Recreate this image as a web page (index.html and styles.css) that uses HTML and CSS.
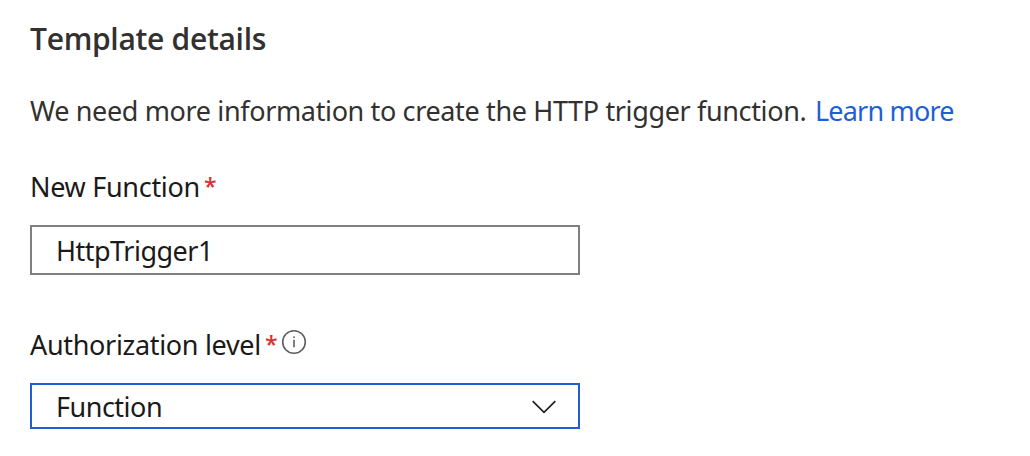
FILE: index.html
```html
<!DOCTYPE html>
<html lang="en">
<head>
<meta charset="utf-8">
<title>Template details</title>
<link rel="stylesheet" href="styles.css">
</head>
<body>
<main class="panel">
  <h1 class="title"><span>Template details</span></h1>
  <p class="intro"><span class="intro-text">We need more information to create the HTTP trigger function.</span><a class="link" href="#">Learn more</a></p>
  <div class="label label-name"><span class="name-text">New Function</span><span class="required">*</span></div>
  <div class="field field-name"><span class="name-value">HttpTrigger1</span></div>
  <div class="label label-auth"><span class="auth-text">Authorization level</span><span class="required">*</span>
    <svg class="info" viewBox="0 0 26 26"><circle cx="13" cy="13" r="11.3"/><path d="M13 10.8v7.4"/><circle class="dot" cx="13" cy="8.2" r="0.9"/></svg>
  </div>
  <div class="field field-auth"><span class="auth-value">Function</span>
    <svg class="chevron" viewBox="0 0 26 16"><path d="M1.7 2.2 13 13.4 24.3 2.2"/></svg>
  </div>
</main>
</body>
</html>
```
FILE: styles.css
```css
* { box-sizing: border-box; }
body { margin: 0; background: #fff; color: #1b1a19; font: 27px/36px "Noto Sans", "Open Sans", sans-serif; }
.panel { width: 1030px; height: 456px; padding: 21px 30px 0; display: flex; flex-direction: column; white-space: nowrap; }
.title { margin: 0; font-family: "Open Sans", sans-serif; font-size: 30px; font-weight: 600; line-height: 36px; letter-spacing: -0.3px; color: #323130; }
.intro { margin: 36px 0 0; display: flex; color: #323130; }
.intro-text { width: 785px; letter-spacing: -0.36px; }
.link { color: #1f5fd6; text-decoration: none; letter-spacing: -0.8px; }
.label { display: flex; height: 36px; }
.label-name { margin-top: 40px; }
.label-auth { margin-top: 52px; }
.name-text { width: 174px; letter-spacing: -0.3px; }
.auth-text { width: 235px; letter-spacing: -0.32px; }
.required { width: 13px; color: #dc3030; font-family: "Open Sans", sans-serif; font-size: 23px; font-weight: 600; line-height: 34px; }
.field { width: 550px; display: flex; align-items: center; justify-content: space-between; padding: 0 21px 0 24px; border: 2px solid #7f7f7f; }
.field-name { height: 50px; margin-top: 20px; padding-top: 2px; }
.field-auth { height: 46px; margin-top: 20px; padding-top: 2px; border-color: #205fd0; }
.name-value { letter-spacing: -0.5px; }
.auth-value { letter-spacing: -0.5px; }
.info { width: 26px; height: 26px; margin: 2px 0 0 3px; fill: none; stroke: #605e5c; stroke-width: 1.6; }
.info .dot { fill: #605e5c; stroke: none; }
.chevron { width: 26px; height: 16px; margin-top: -1px; fill: none; stroke: #201f1e; stroke-width: 1.7; }
```
